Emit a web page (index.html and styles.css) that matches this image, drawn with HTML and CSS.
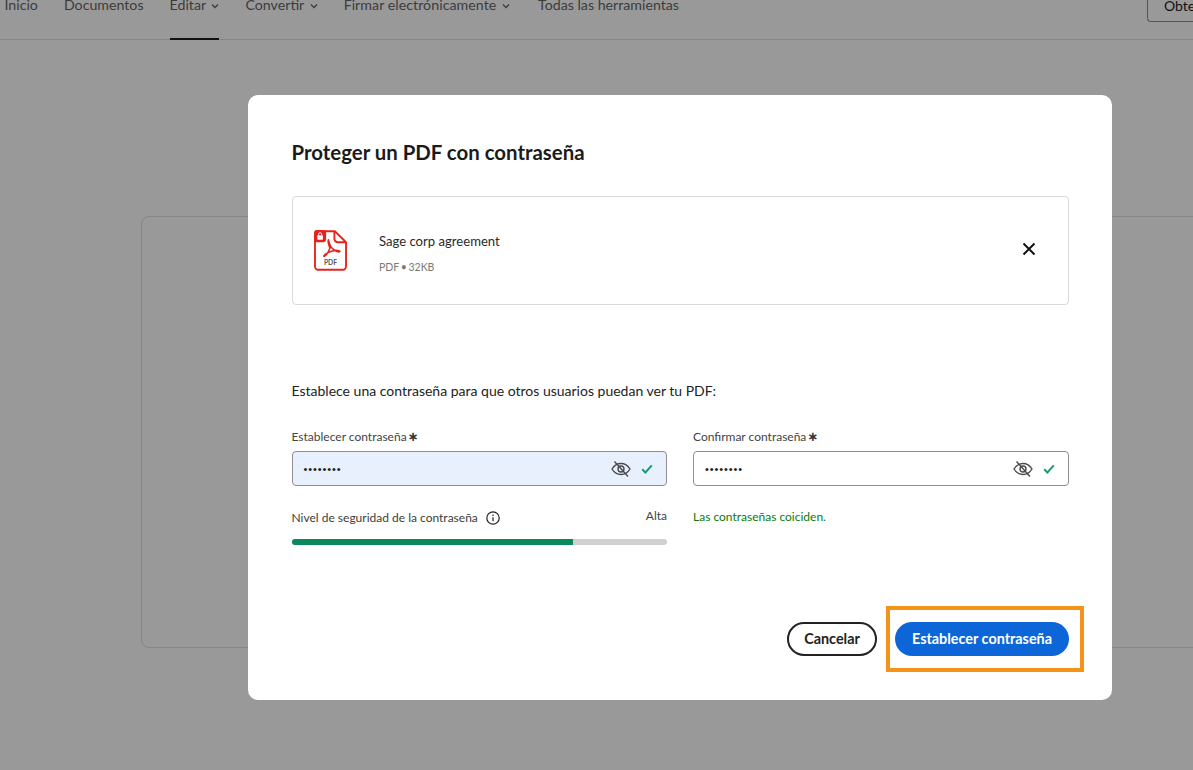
FILE: index.html
```html
<!DOCTYPE html>
<html lang="es">
<head>
<meta charset="utf-8">
<title>Proteger un PDF con contraseña</title>
<link rel="stylesheet" href="styles.css">
</head>
<body>
<div class="page">
  <header class="topbar">
    <nav class="nav">
      <a class="nav-item">Inicio</a>
      <a class="nav-item">Documentos</a>
      <a class="nav-item active">Editar <svg class="chev" viewBox="0 0 8 6"><path d="M1 1.5l3 3 3-3"/></svg></a>
      <a class="nav-item">Convertir <svg class="chev" viewBox="0 0 8 6"><path d="M1 1.5l3 3 3-3"/></svg></a>
      <a class="nav-item long">Firmar electrónicamente <svg class="chev" viewBox="0 0 8 6"><path d="M1 1.5l3 3 3-3"/></svg></a>
      <a class="nav-item">Todas las herramientas</a>
    </nav>
    <div class="get-btn">Obtener</div>
  </header>
  <main class="backdrop-area">
    <div class="back-card"></div>
  </main>
</div>

<section class="modal">
  <h1 class="title">Proteger un PDF con contraseña</h1>
  <div class="file-card">
    <svg class="pdf-icon" viewBox="0 0 34 42">
      <path class="pdf-outline" d="M4 1.2h17.5L33 12.5V37.500a3.300 3.300 0 0 1-3.300 3.300H4.300A3.300 3.300 0 0 1 1 37.500V4a2.800 2.800 0 0 1 3-2.800z"/>
      <path class="pdf-outline" d="M21 1.5V9a3.5 3.5 0 0 0 3.5 3.5H33"/>
      <rect class="pdf-badge" x="0" y="0" width="12.500" height="12.500" rx="3"/>
      <rect class="pdf-lock" x="3.400" y="5.400" width="5.800" height="4.400" rx=".6"/>
      <path class="pdf-shackle" d="M4.700 5.600V4.300a1.600 1.600 0 0 1 3.200 0v1.300"/>
      <path class="pdf-swoosh" d="M15 10c-1.200 0 .1 5.300 1.500 8.500-1.400 3.700-4.500 8.800-6 8.700-1.500-.2 1.900-3.800 7.500-5.500 4-1.200 8.700-1 8.700.2 0 1.500-5.200.1-8.500-3.700-2-2.400-3.400-8.200-3.200-8.200z"/>
      <text class="pdf-text" x="17" y="35.500" text-anchor="middle">PDF</text>
    </svg>
    <div class="file-info">
      <div class="file-name">Sage corp agreement</div>
      <div class="file-meta">PDF • 32KB</div>
    </div>
    <svg class="close" viewBox="0 0 14 14"><path d="M1.500 1.500l11 11M12.500 1.500l-11 11"/></svg>
  </div>

  <p class="prompt">Establece una contraseña para que otros usuarios puedan ver tu PDF:</p>

  <div class="fields">
    <div class="field">
      <label class="label">Establecer contraseña <span class="star">∗</span></label>
      <div class="input filled">
        <span class="dots">••••••••</span>
        <svg class="eye" viewBox="0 0 20 18"><path d="M1 9c2-3.300 5.300-5.500 9-5.500S17 5.700 19 9c-2 3.300-5.300 5.500-9 5.500S3 12.300 1 9z"/><circle cx="10" cy="9" r="3"/><path d="M3.500 1.500l13.500 15"/></svg>
        <svg class="check" viewBox="0 0 12 10"><path d="M1.200 5.200l3.200 3.300 6.400-7.200"/></svg>
      </div>
      <div class="strength-row">
        <span class="strength-label">Nivel de seguridad de la contraseña
          <svg class="info" viewBox="0 0 14 14"><circle cx="7" cy="7" r="6.200"/><path d="M7 6.300v4"/><path d="M7 3.500v1.400"/></svg>
        </span>
        <span class="strength-value">Alta</span>
      </div>
      <div class="meter"><div class="meter-fill" style="width:75%"></div></div>
    </div>
    <div class="field">
      <label class="label">Confirmar contraseña <span class="star">∗</span></label>
      <div class="input">
        <span class="dots">••••••••</span>
        <svg class="eye" viewBox="0 0 20 18"><path d="M1 9c2-3.300 5.300-5.500 9-5.500S17 5.700 19 9c-2 3.300-5.300 5.500-9 5.500S3 12.300 1 9z"/><circle cx="10" cy="9" r="3"/><path d="M3.500 1.500l13.500 15"/></svg>
        <svg class="check" viewBox="0 0 12 10"><path d="M1.200 5.200l3.200 3.300 6.400-7.200"/></svg>
      </div>
      <div class="match">Las contraseñas coiciden.</div>
    </div>
  </div>

  <div class="actions">
    <button class="btn secondary">Cancelar</button>
    <div class="highlight"><button class="btn primary">Establecer contraseña</button></div>
  </div>
</section>
</body>
</html>
```
FILE: styles.css
```css
* { box-sizing: border-box; }
html, body { margin: 0; height: 100%; }
body {
  background: #999999;
  font-family: "Lato", "Liberation Sans", sans-serif;
  color: #131313;
  overflow: hidden;
}
.page { height: 770px; display: flex; flex-direction: column; }
.topbar {
  height: 40px;
  border-bottom: 1px solid #868686;
  display: flex;
  justify-content: space-between;
  padding-left: 4.500px;
  flex: none;
}
.nav { display: flex; gap: 26px; height: 40px; }
.nav-item {
  font-size: 14.200px;
  line-height: 14px;
  color: #3c3c3c;
  margin-top: -2px;
  height: 42px;
  white-space: nowrap;
}
.nav-item.active { border-bottom: 2px solid #111; }
.nav-item.long { letter-spacing: .05px; padding-right: 2px; }
.chev { width: 8px; height: 6px; margin-left: 2px; vertical-align: 1px; fill: none; stroke: #3c3c3c; stroke-width: 1.300; }
.get-btn {
  height: 22px;
  width: 60px;
  border: 1px solid #555;
  border-top: 0;
  border-right: 0;
  border-radius: 0 0 0 4px;
  padding: 0 0 0 16px;
  font-size: 14px;
  line-height: 11px;
  color: #111;
  overflow: hidden;
  white-space: nowrap;
  margin-right: -14px;
}
.backdrop-area { flex: 1; padding: 176px 0 0 141px; }
.back-card {
  width: 1100px;
  height: 432px;
  border: 1px solid #878787;
  border-radius: 8px;
}
.modal {
  position: absolute;
  left: 248px;
  top: 95px;
  width: 864px;
  height: 605px;
  background: #fff;
  border-radius: 10px;
  padding: 44px 0 0 43.500px;
  display: flex;
  flex-direction: column;
}
.title { margin: 0; font-size: 20.400px; line-height: 27px; font-weight: 700; color: #1b1b1b; }
.file-card {
  margin-top: 30px;
  height: 109px;
  width: 777px;
  border: 1px solid #d9d9d9;
  border-radius: 4px;
  display: flex;
  align-items: center;
  padding: 0 32px 0 21px;
}
.pdf-icon { width: 33px; height: 41px; flex: none; margin-bottom: 1px; }
.pdf-outline { fill: none; stroke: #e4231b; stroke-width: 1.900; stroke-linejoin: round; }
.pdf-badge { fill: #e4231b; }
.pdf-lock { fill: #fff; }
.pdf-shackle { fill: none; stroke: #fff; stroke-width: 1; }
.pdf-swoosh { fill: none; stroke: #e4231b; stroke-width: 1.600; stroke-linejoin: round; }
.pdf-text { font-size: 7px; font-weight: 700; fill: #555; font-family: "Lato", sans-serif; }
.file-info { margin-left: 32.500px; flex: 1; margin-top: 6px; }
.file-name { font-size: 13.100px; line-height: 18px; color: #2a2a2a; }
.file-meta { font-size: 10.500px; line-height: 16px; color: #7a7a7a; margin-top: 9.500px; word-spacing: -1px; }
.close { width: 14px; height: 14px; fill: none; stroke: #131313; stroke-width: 2; margin-bottom: 4px; }
.prompt { margin: 77px 0 0; font-size: 14px; line-height: 18px; color: #222; }
.fields { margin-top: 29px; display: grid; grid-template-columns: 375.500px 375.500px; column-gap: 26px; width: 777px; }
.label { display: block; font-size: 12px; line-height: 16px; color: #444; }
.star { font-family: "DejaVu Sans", sans-serif; font-weight: 700; font-size: 13px; color: #333; margin-left: -2px; }
.input {
  margin-top: 6px;
  height: 35px;
  border: 1px solid #8e8e8e;
  border-radius: 4px;
  display: flex;
  align-items: center;
  padding: 0 13px 0 11px;
  background: #fff;
}
.input.filled { background: #e8f0fe; }
.dots { flex: 1; font-family: "Liberation Sans", sans-serif; font-size: 11px; letter-spacing: .9px; color: #222; line-height: 1; margin-top: 2px; }
.eye { width: 20px; height: 18px; fill: none; stroke: #4b4b4b; stroke-width: 1.400; }
.check { width: 12px; height: 10px; margin-left: 10px; fill: none; stroke: #1a9c73; stroke-width: 2; }
.strength-row { display: flex; justify-content: space-between; margin-top: 22px; height: 20px; }
.strength-label { font-size: 12px; line-height: 20px; color: #3d3d3d; display: flex; align-items: center; gap: 8px; }
.info { width: 14px; height: 14px; fill: none; stroke: #222; stroke-width: 1.200; }
.strength-value { font-size: 12px; line-height: 16px; color: #444; }
.meter { margin-top: 11px; height: 6px; background: #d0d0d0; border-radius: 3px; overflow: hidden; }
.meter-fill { height: 100%; background: #0a8a5a; }
.match { margin-top: 22px; font-size: 12px; line-height: 18px; color: #0b7a0b; }
.actions { margin-top: auto; display: flex; justify-content: flex-end; align-items: center; gap: 9px; width: 792.500px; margin-bottom: 28px; }
.btn { height: 34px; border-radius: 17px; font-family: inherit; font-size: 14.400px; font-weight: 700; padding: 0 0 2px; }
.btn.secondary { width: 90px; background: #fff; border: 2px solid #222; color: #222; }
.btn.primary { width: 174px; background: #0d66d8; border: 0; color: #fff; }
.highlight { border: 4px solid #f39418; padding: 12px 11px 12px 5px; width: 198px; }
```
